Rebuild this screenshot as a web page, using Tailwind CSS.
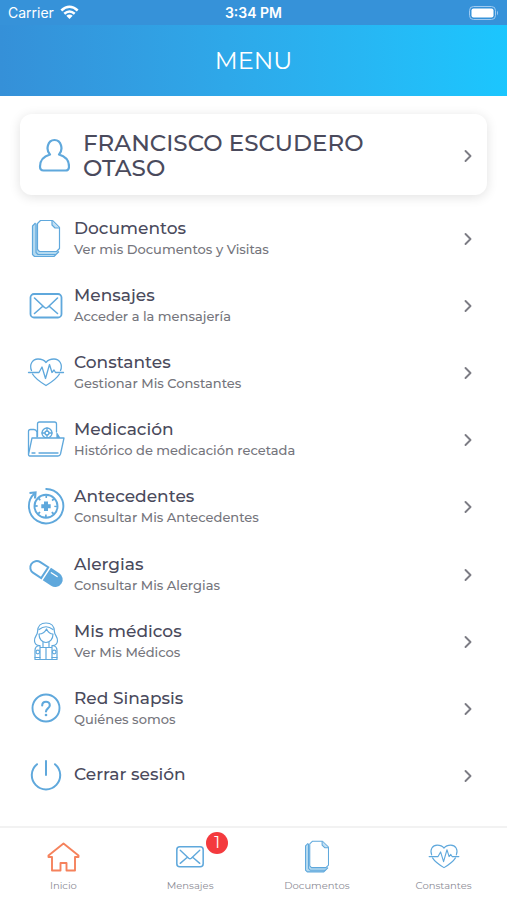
<!DOCTYPE html>
<html lang="es">
<head>
  <meta charset="UTF-8" />
  <meta name="viewport" content="width=device-width, initial-scale=1.0"/>
  <title>Menu</title>
  <script src="https://cdn.jsdelivr.net/npm/@tailwindcss/browser@4"></script>
</head>
<body class="min-h-screen flex flex-col bg-white font-[Montserrat,Inter,sans-serif] text-[#4a4a5c]">

  <!-- Shared icons -->
  <svg class="hidden">
    <symbol id="chevron" viewBox="0 0 12 16"><path d="M3.500 3l5 5-5 5" fill="none" stroke="#7c7c84" stroke-width="1.900" stroke-linecap="round" stroke-linejoin="round"/></symbol>
    <symbol id="documents" viewBox="0 0 40 40">
      <g fill="none" stroke="#5fa8dc" stroke-width="1.200" stroke-linejoin="round">
        <path d="M9.500 4L6.500 7v28.500l2 2H28l5-5" fill="#b5daf0"/>
        <path d="M10 4.500v29l2 2h18" />
        <path d="M14.500 1.500h12l7 7v21l-3 3H13.500l-2-2V4.500z" fill="#fff"/>
        <path d="M26 1.500v4.500l3 3h4.500" fill="#c3e0f4"/>
      </g>
    </symbol>
    <symbol id="envelope" viewBox="0 0 40 40">
      <g fill="none" stroke="#5fa8dc" stroke-linecap="round" stroke-linejoin="round">
        <rect x="4.500" y="8" width="31" height="23.500" rx="3.500" stroke-width="1.800"/>
        <path d="M8.500 12l10 9.500q1.500 1.200 3 0l10-9.500M8.500 27.500l8-7M31.500 27.500l-8-7" stroke-width="1.600"/>
      </g>
    </symbol>
    <symbol id="heart" viewBox="0 0 40 40">
      <g fill="none" stroke="#5fa8dc" stroke-width="1.300" stroke-linecap="round" stroke-linejoin="round">
        <path d="M5.500 17.500C3 11.500 6.500 6 12 6c4 0 6.500 1.500 8 3.500C21.500 7.500 24 6 28 6c5.500 0 9 5.500 6.500 11.500M6.500 21C9.500 26 15 29.500 20 32.500c5-3 10.500-6.500 13.500-11.500"/>
        <path d="M2.500 19.500h10.500l3-5.500 3.500 11.500 4-14 2.500 8 2-2.500 1.500 2.500h8"/>
      </g>
    </symbol>
  </svg>

  <header class="bg-linear-to-r from-[#3590d8] to-[#1bc6fe] text-white">
    <div class="h-[25px] px-2 grid grid-cols-3 items-center bg-[#3692d9] font-[Inter,sans-serif] text-sm">
      <div class="flex items-center gap-1.5">
        <span>Carrier</span>
        <svg class="w-[19px] h-[15px]" viewBox="0 0 19 15" fill="none" stroke="currentColor" stroke-width="2.500">
          <path d="M1.300 5.500q8.200-7.500 16.400 0M4.300 8.800q5.200-4.600 10.400 0"/>
          <path d="M6.300 10.700q3.200-2.600 6.400 0L9.500 14z" fill="currentColor" stroke="none"/>
        </svg>
      </div>
      <span class="text-center font-semibold">3:34 PM</span>
      <svg class="w-[30px] h-[14px] justify-self-end" viewBox="0 0 30 14">
        <rect x="0.500" y="0.500" width="26" height="13" rx="4" fill="none" stroke="#9fcaf0"/>
        <rect x="2.500" y="2.500" width="22" height="9" rx="2" fill="#fff"/>
        <path d="M28 4.500q2 2.500 0 5z" fill="#9fcaf0"/>
      </svg>
    </div>
    <h1 class="h-[71px] flex items-center justify-center text-2xl">MENU</h1>
  </header>

  <main class="flex-1 flex flex-col pt-[18px] pb-4">
    <!-- User card -->
    <a href="#" class="mx-5 mb-[10px] h-[81px] pt-0.5 pl-[18px] pr-[13px] flex items-center rounded-xl shadow-[0_2px_12px_rgba(0,0,0,0.12)]">
      <svg class="w-8 h-9 shrink-0" viewBox="0 0 32 36" fill="none" stroke="#5fa8dc" stroke-width="2.200" stroke-linejoin="round">
        <path d="M12 16.500C5 18.500 2 23.500 2 28.500q0 4 3.500 4h22q3.500 0 3.500-4C31 23.500 28 18.500 21 16.500c4.500-4.500 2.500-14.500-4.500-14.500S7.500 12 12 16.500z"/>
      </svg>
      <span class="flex-1 ml-[13px] pr-12 text-[23px] leading-[25px] font-medium">FRANCISCO ESCUDERO OTASO</span>
      <svg class="w-3 h-4 shrink-0"><use href="#chevron"/></svg>
    </a>

    <nav class="flex-1 grid auto-rows-fr pl-[26px] pr-[33px]">
      <a href="#" class="flex items-center gap-2">
        <svg class="size-10"><use href="#documents"/></svg>
        <span class="flex-1 flex flex-col">
          <span class="text-[17px] leading-[21px] font-medium">Documentos</span>
          <span class="text-[13px] leading-[21px] font-medium text-[#75757c]">Ver mis Documentos y Visitas</span>
        </span>
        <svg class="w-3 h-4"><use href="#chevron"/></svg>
      </a>
      <a href="#" class="flex items-center gap-2">
        <svg class="size-10"><use href="#envelope"/></svg>
        <span class="flex-1 flex flex-col">
          <span class="text-[17px] leading-[21px] font-medium">Mensajes</span>
          <span class="text-[13px] leading-[21px] font-medium text-[#75757c]">Acceder a la mensajería</span>
        </span>
        <svg class="w-3 h-4"><use href="#chevron"/></svg>
      </a>
      <a href="#" class="flex items-center gap-2">
        <svg class="size-10"><use href="#heart"/></svg>
        <span class="flex-1 flex flex-col">
          <span class="text-[17px] leading-[21px] font-medium">Constantes</span>
          <span class="text-[13px] leading-[21px] font-medium text-[#75757c]">Gestionar Mis Constantes</span>
        </span>
        <svg class="w-3 h-4"><use href="#chevron"/></svg>
      </a>
      <a href="#" class="flex items-center gap-2">
        <svg class="size-10" viewBox="0 0 40 40" fill="none" stroke="#5fa8dc" stroke-width="1.300" stroke-linecap="round" stroke-linejoin="round">
          <path d="M2.500 34V11.500q0-2 2-2h3.500q2 0 3 2.500v5"/>
          <path d="M11.500 16.500V4q0-2 2-2h15q2 0 2 2v8"/>
          <path d="M31 17.500v-4l2.500 4z" fill="#5fa8dc"/>
          <circle cx="21" cy="13" r="5"/>
          <circle cx="21" cy="13" r="2"/>
          <path d="M21 8v3M21 15v3M16 13h3M23 13h3"/>
          <path d="M6 18h32l-3.500 16q-.5 2-2.500 2H4.500q-2 0-2-1.500z" fill="#fff"/>
          <path d="M6 33h3M13 33h19"/>
        </svg>
        <span class="flex-1 flex flex-col">
          <span class="text-[17px] leading-[21px] font-medium">Medicación</span>
          <span class="text-[13px] leading-[21px] font-medium text-[#75757c]">Histórico de medicación recetada</span>
        </span>
        <svg class="w-3 h-4"><use href="#chevron"/></svg>
      </a>
      <a href="#" class="flex items-center gap-2">
        <svg class="size-10" viewBox="0 0 40 40" fill="none" stroke="#5fa8dc" stroke-width="1.900">
          <path d="M19.500 2A17.200 17.200 0 1 1 8.500 6.500"/>
          <path d="M3.500 6l6-.5-.5 6" stroke-width="2.200"/>
          <circle cx="20" cy="19.200" r="11.500"/>
          <circle cx="20" cy="19.200" r="9.600" stroke-dasharray="1.800 5.740" stroke-dashoffset="0.900" stroke-width="2.600"/>
          <path d="M20 14.500v9.400M15.300 19.200h9.400" stroke-width="4"/>
        </svg>
        <span class="flex-1 flex flex-col">
          <span class="text-[17px] leading-[21px] font-medium">Antecedentes</span>
          <span class="text-[13px] leading-[21px] font-medium text-[#75757c]">Consultar Mis Antecedentes</span>
        </span>
        <svg class="w-3 h-4"><use href="#chevron"/></svg>
      </a>
      <a href="#" class="flex items-center gap-2">
        <svg class="size-10" viewBox="0 0 40 40">
          <g transform="rotate(33 20 18.500)" stroke="#5fa8dc" stroke-width="2">
            <path d="M18.500 12H9a6.500 6.500 0 0 0 0 13h9.500z" fill="none"/>
            <path d="M22 12h9a6.500 6.500 0 0 1 0 13h-9z" fill="#5fa8dc"/>
            <path d="M24 15h7" stroke="#fff" stroke-width="1.300" stroke-linecap="round"/>
          </g>
        </svg>
        <span class="flex-1 flex flex-col">
          <span class="text-[17px] leading-[21px] font-medium">Alergias</span>
          <span class="text-[13px] leading-[21px] font-medium text-[#75757c]">Consultar Mis Alergias</span>
        </span>
        <svg class="w-3 h-4"><use href="#chevron"/></svg>
      </a>
      <a href="#" class="flex items-center gap-2">
        <svg class="size-10" viewBox="0 0 40 40" fill="none" stroke="#5fa8dc" stroke-width="1.200" stroke-linecap="round" stroke-linejoin="round">
          <path d="M11.500 10C11.500 4 15 1 20 1S28.500 4 28.500 10c0 3 3.500 5 3 9-.3 3-2.500 4.500-5 4.500M11.500 10c0 3-3.500 5-3 9 .3 3 2.500 4.500 5 4.500"/>
          <path d="M13 12c0 5 3 8.500 7 8.500s7-3.500 7-8.500c-3 0-5-2-6.500-5-1.500 3-4.500 5-7.500 5z"/>
          <path d="M13 7.500q7-5.500 14 0M17 20.500v4M23 20.500v4"/>
          <path d="M13.500 23.500q-4.500.5-4.500 5V37.500h22v-9q0-4.500-4.500-5M14 23.500v14M26 23.500v14M20 26v11.500M14 25.500h12"/>
          <circle cx="11.800" cy="30" r="1.800"/>
          <circle cx="28.200" cy="30" r="1.800"/>
          <path d="M9 35.500h5M26 35.500h5"/>
        </svg>
        <span class="flex-1 flex flex-col">
          <span class="text-[17px] leading-[21px] font-medium">Mis médicos</span>
          <span class="text-[13px] leading-[21px] font-medium text-[#75757c]">Ver Mis Médicos</span>
        </span>
        <svg class="w-3 h-4"><use href="#chevron"/></svg>
      </a>
      <a href="#" class="flex items-center gap-2">
        <svg class="size-10" viewBox="0 0 40 40" fill="none" stroke="#5fa8dc" stroke-width="1.900" stroke-linecap="round">
          <circle cx="20" cy="19" r="13.500"/>
          <path d="M16.200 16.500c0-5 7.600-5 7.600-.3 0 3.300-3.800 3-3.800 6.300" stroke-width="2.100"/>
          <circle cx="20" cy="26" r="1.300" fill="#5fa8dc" stroke="none"/>
        </svg>
        <span class="flex-1 flex flex-col">
          <span class="text-[17px] leading-[21px] font-medium">Red Sinapsis</span>
          <span class="text-[13px] leading-[21px] font-medium text-[#75757c]">Quiénes somos</span>
        </span>
        <svg class="w-3 h-4"><use href="#chevron"/></svg>
      </a>
      <a href="#" class="flex items-center gap-2">
        <svg class="size-10" viewBox="0 0 40 40" fill="none" stroke="#5fa8dc" stroke-width="2" stroke-linecap="round">
          <path d="M11 8.200a14.200 14.200 0 1 0 18 0M20 5v14"/>
        </svg>
        <span class="flex-1 pb-1 text-[17px] leading-[21px] font-medium">Cerrar sesión</span>
        <svg class="w-3 h-4"><use href="#chevron"/></svg>
      </a>
    </nav>
  </main>

  <!-- Tab bar -->
  <nav class="h-[74px] pt-3 grid grid-cols-4 border-t-2 border-[#f2f2f2] text-[10px] leading-4 text-[#8c8c96]">
    <a href="#" class="flex flex-col items-center gap-1">
      <svg class="size-[34px]" viewBox="0 0 34 34" fill="none" stroke="#f5825c" stroke-width="1.900" stroke-linejoin="round">
        <path d="M17.500 3.500L2.500 15.500v1.500h3.500v13.500h8.500v-7.500h6V30.500h8.500V17h3.500v-1.500z"/>
      </svg>
      <span>Inicio</span>
    </a>
    <a href="#" class="flex flex-col items-center gap-1">
      <span class="relative">
        <svg class="size-[34px]"><use href="#envelope"/></svg>
        <span class="absolute -top-2 -right-[21px] size-[22px] flex items-center justify-center rounded-full bg-[#f43a3e] text-base text-white">1</span>
      </span>
      <span>Mensajes</span>
    </a>
    <a href="#" class="flex flex-col items-center gap-1">
      <svg class="size-[34px]"><use href="#documents"/></svg>
      <span>Documentos</span>
    </a>
    <a href="#" class="flex flex-col items-center gap-1">
      <svg class="size-[34px]"><use href="#heart"/></svg>
      <span>Constantes</span>
    </a>
  </nav>

</body>
</html>
